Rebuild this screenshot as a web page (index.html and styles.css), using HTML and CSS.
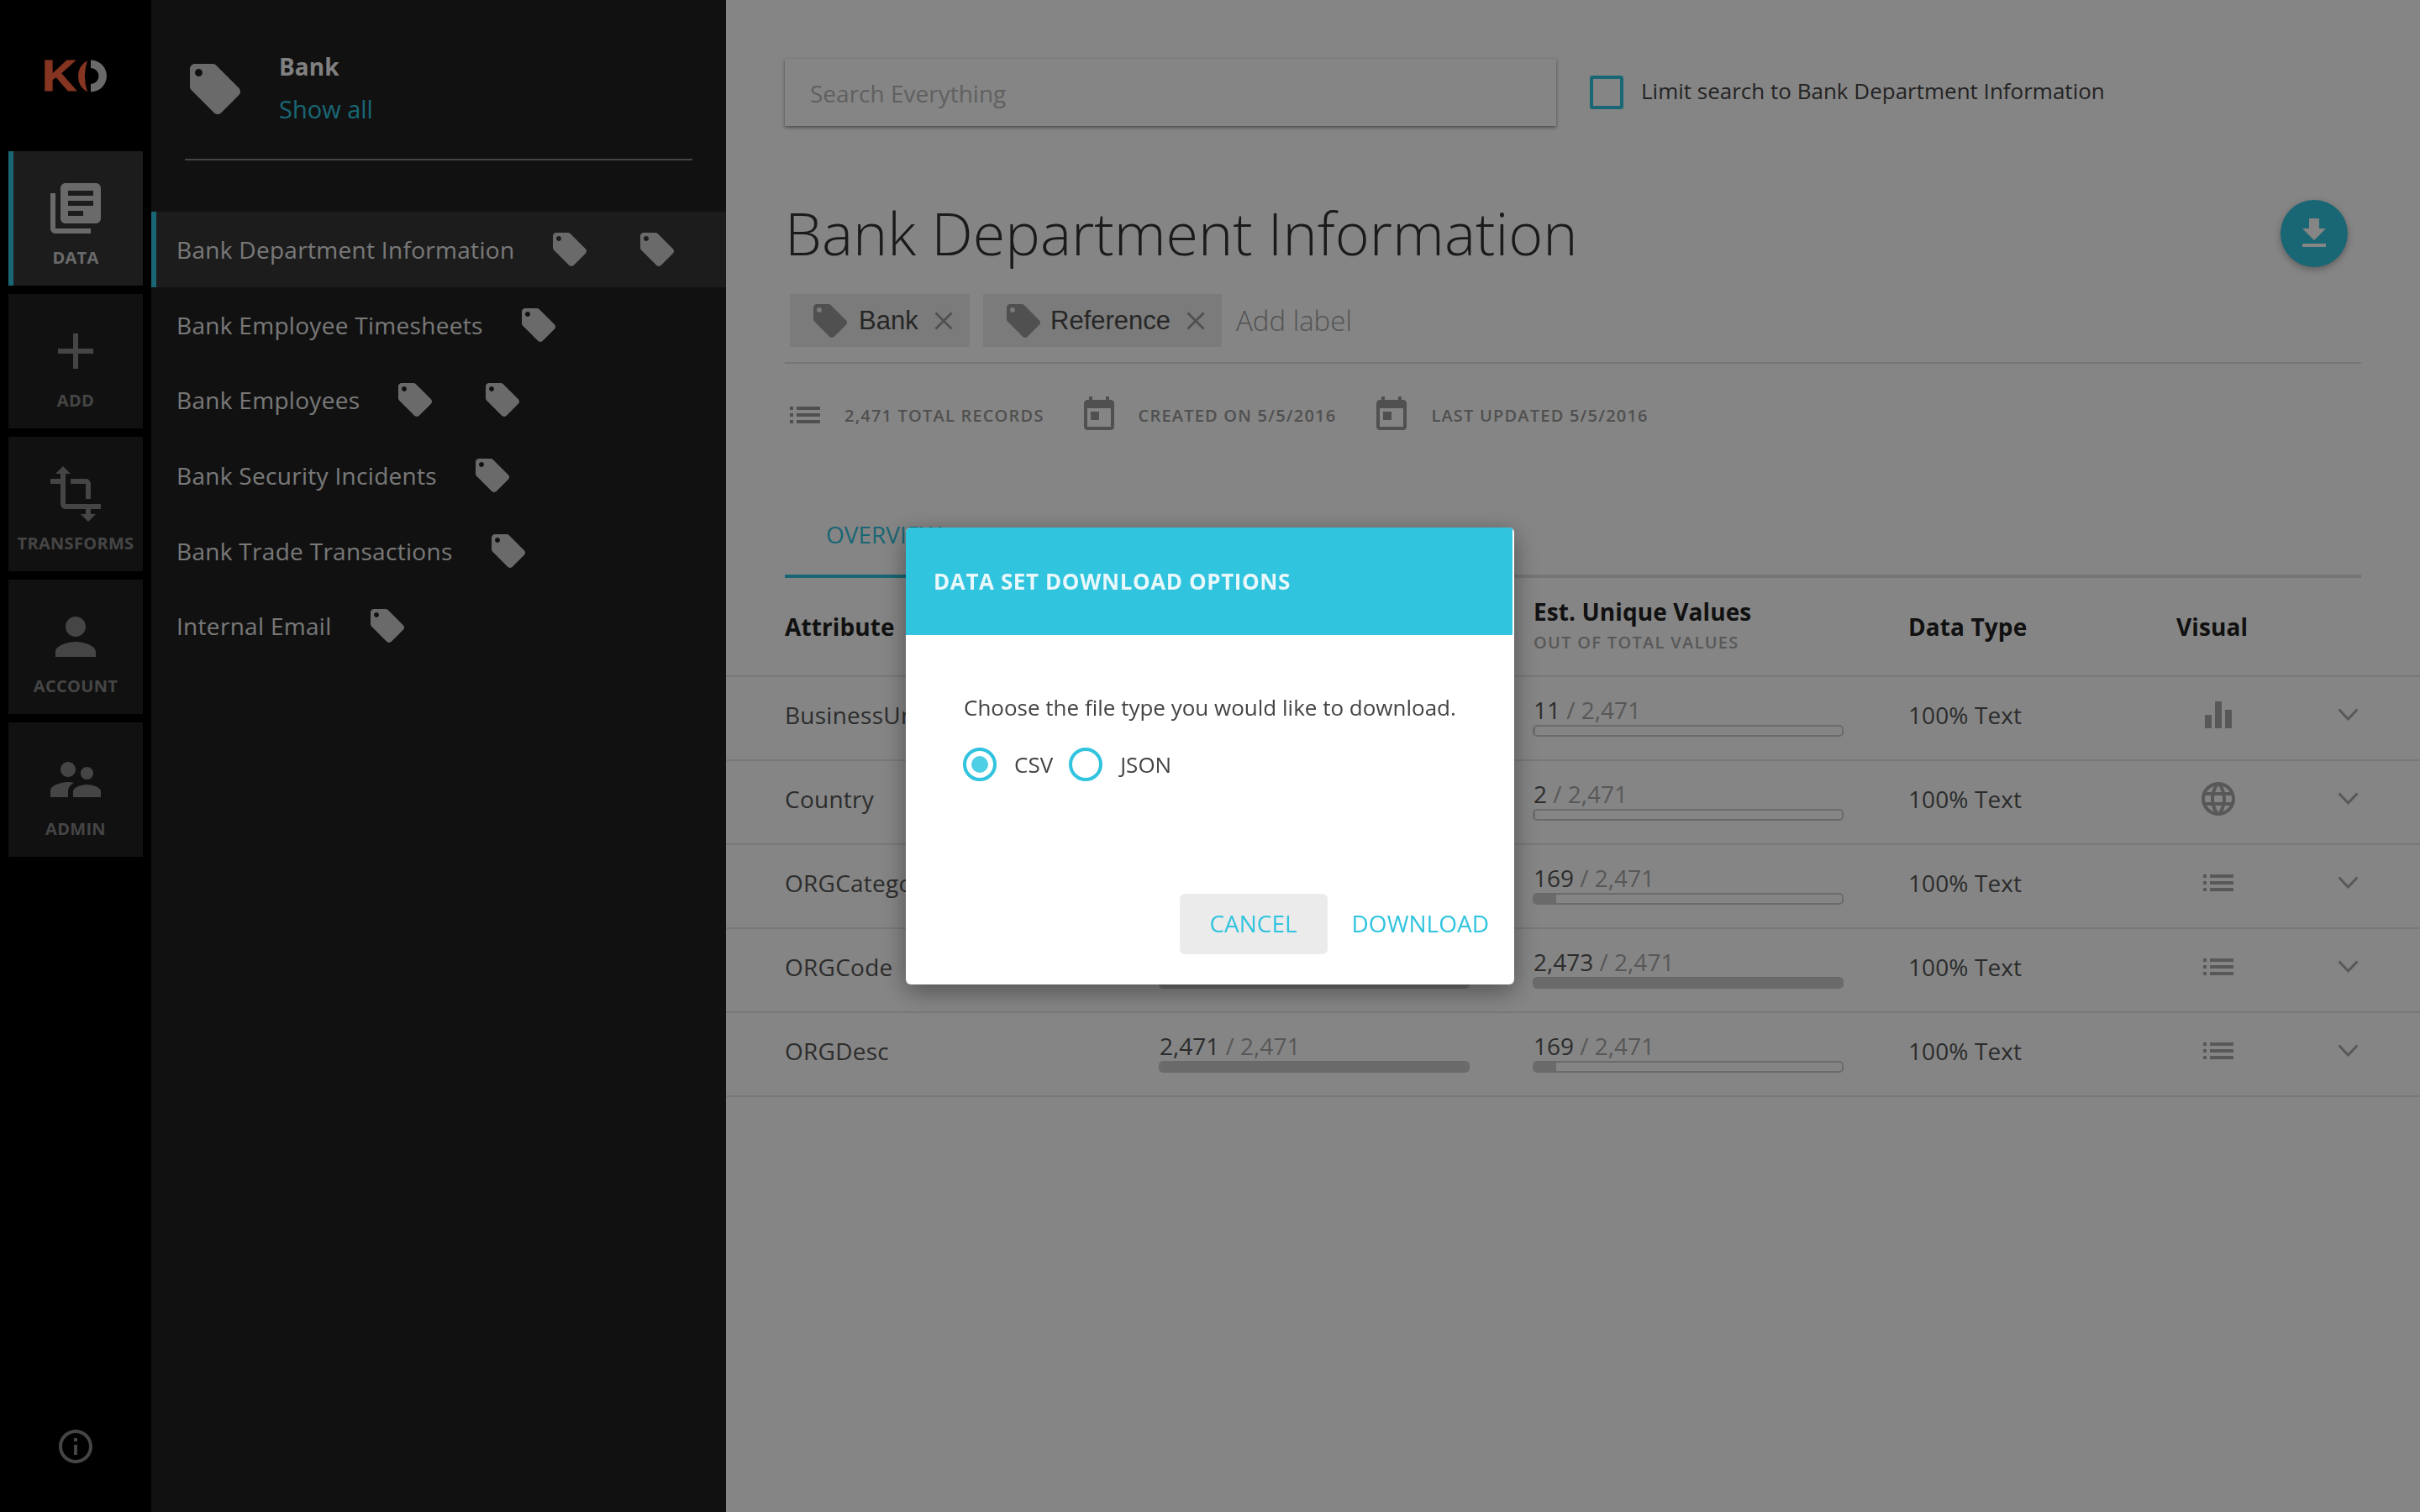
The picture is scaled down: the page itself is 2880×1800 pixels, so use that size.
FILE: index.html
```html
<!DOCTYPE html>
<html lang="en">
<head>
<meta charset="utf-8">
<title>Bank Department Information</title>
<link rel="stylesheet" href="styles.css">
</head>
<body>
<svg class="sprite" xmlns="http://www.w3.org/2000/svg">
  <symbol id="i-tag" viewBox="0 0 24 24"><path d="M21.41 11.58l-9-9C12.05 2.22 11.55 2 11 2H4c-1.1 0-2 .9-2 2v7c0 .55.22 1.05.59 1.42l9 9c.36.36.86.58 1.41.58.55 0 1.05-.22 1.41-.59l7-7c.37-.36.59-.86.59-1.41 0-.55-.23-1.06-.59-1.42zM5.5 7C4.67 7 4 6.33 4 5.5S4.67 4 5.5 4 7 4.67 7 5.5 6.33 7 5.5 7z"/></symbol>
  <symbol id="i-list" viewBox="0 0 24 24"><path d="M3 13h2v-2H3v2zm0 4h2v-2H3v2zm0-8h2V7H3v2zm4 4h14v-2H7v2zm0 4h14v-2H7v2zM7 7v2h14V7H7z"/></symbol>
  <symbol id="i-today" viewBox="0 0 24 24"><path d="M19 3h-1V1h-2v2H8V1H6v2H5c-1.11 0-1.99.9-1.99 2L3 19c0 1.1.89 2 2 2h14c1.1 0 2-.9 2-2V5c0-1.1-.9-2-2-2zm0 16H5V8h14v11zM7 10h5v5H7z"/></symbol>
  <symbol id="i-chev" viewBox="0 0 25 15"><path d="M1.5 1.5L12.5 13 23.5 1.5" fill="none" stroke="currentColor" stroke-width="3"/></symbol>
  <symbol id="i-close" viewBox="0 0 22 22"><path d="M1.500 1.500L20.500 20.500M20.500 1.500L1.500 20.500" fill="none" stroke="currentColor" stroke-width="2.800"/></symbol>
</svg>

<div class="app">
  <nav class="rail">
    <div class="logo">
      <span class="logo-k">K</span>
      <svg class="logo-o" viewBox="92 71 36 40" width="36" height="40"><path class="logo-red" d="M104 72A21.500 21.500 0 0 0 104 109.500A60 60 0 0 1 104 72Z"/><path class="logo-gray" d="M108 71.500A19 19 0 0 1 108 109.500V100A9.500 9.500 0 0 0 108 81Z"/></svg>
    </div>
    <a class="rail-item is-active"><svg class="rail-icon" viewBox="0 0 24 24"><path d="M4 6H2v14c0 1.1.9 2 2 2h14v-2H4V6zm16-4H8c-1.1 0-2 .9-2 2v12c0 1.1.9 2 2 2h12c1.1 0 2-.9 2-2V4c0-1.1-.9-2-2-2zm-1 9H9V9h10v2zm-4 4H9v-2h6v2zm4-8H9V5h10v2z"/></svg><span class="rail-label">DATA</span></a>
    <a class="rail-item"><svg class="rail-icon" viewBox="0 0 24 24"><path d="M19 13h-6v6h-2v-6H5v-2h6V5h2v6h6v2z"/></svg><span class="rail-label">ADD</span></a>
    <a class="rail-item"><svg class="rail-icon" viewBox="0 0 24 24"><path d="M22 18v-2H8V4h2L7 1 4 4h2v2H2v2h4v8c0 1.100.9 2 2 2h8v2h-2l3 3 3-3h-2v-2h4zM10 8h6v6h2V8c0-1.100-.9-2-2-2h-6v2z"/></svg><span class="rail-label">TRANSFORMS</span></a>
    <a class="rail-item"><svg class="rail-icon" viewBox="0 0 24 24"><path d="M12 12c2.210 0 4-1.790 4-4s-1.790-4-4-4-4 1.790-4 4 1.790 4 4 4zm0 2c-2.670 0-8 1.340-8 4v2h16v-2c0-2.660-5.330-4-8-4z"/></svg><span class="rail-label">ACCOUNT</span></a>
    <a class="rail-item"><svg class="rail-icon" viewBox="0 0 24 24"><path d="M16.500 12c1.380 0 2.490-1.120 2.490-2.500S17.880 7 16.500 7C15.120 7 14 8.120 14 9.500s1.120 2.500 2.500 2.500zM9 11c1.660 0 2.990-1.340 2.990-3S10.660 5 9 5C7.340 5 6 6.340 6 8s1.340 3 3 3zm7.500 3c-1.830 0-5.500.92-5.500 2.750V19h11v-2.250c0-1.830-3.670-2.750-5.500-2.750zM9 13c-2.330 0-7 1.170-7 3.500V19h7v-2.250c0-.85.33-2.340 2.370-3.470C10.500 13.100 9.660 13 9 13z"/></svg><span class="rail-label">ADMIN</span></a>
    <svg class="rail-info" viewBox="0 0 24 24"><path d="M11 17h2v-6h-2v6zm1-15C6.480 2 2 6.480 2 12s4.480 10 10 10 10-4.480 10-10S17.520 2 12 2zm0 18c-4.410 0-8-3.590-8-8s3.590-8 8-8 8 3.590 8 8-3.590 8-8 8zM11 9h2V7h-2v2z"/></svg>
  </nav>

  <aside class="panel">
    <header class="panel-head">
      <svg class="tag-lg"><use href="#i-tag"/></svg>
      <div class="panel-title">
        <div class="panel-name">Bank</div>
        <a class="panel-link">Show all</a>
      </div>
    </header>
    <ul class="sets">
      <li class="set is-active"><span>Bank Department Information</span><svg class="tag-sm"><use href="#i-tag"/></svg><svg class="tag-sm"><use href="#i-tag"/></svg></li>
      <li class="set"><span>Bank Employee Timesheets</span><svg class="tag-sm"><use href="#i-tag"/></svg></li>
      <li class="set"><span>Bank Employees</span><svg class="tag-sm"><use href="#i-tag"/></svg><svg class="tag-sm"><use href="#i-tag"/></svg></li>
      <li class="set"><span>Bank Security Incidents</span><svg class="tag-sm"><use href="#i-tag"/></svg></li>
      <li class="set"><span>Bank Trade Transactions</span><svg class="tag-sm"><use href="#i-tag"/></svg></li>
      <li class="set"><span>Internal Email</span><svg class="tag-sm"><use href="#i-tag"/></svg></li>
    </ul>
  </aside>

  <main class="main">
    <div class="top">
      <div class="search">Search Everything</div>
      <span class="check"></span>
      <span class="check-label">Limit search to Bank Department Information</span>
    </div>

    <div class="title-row">
      <h1 class="title">Bank Department Information</h1>
      <span class="fab"><svg viewBox="0 0 24 24"><path d="M19 9h-4V3H9v6H5l7 7 7-7zM5 18v2h14v-2H5z"/></svg></span>
    </div>

    <div class="labels">
      <span class="chip chip-bank"><svg class="chip-tag"><use href="#i-tag"/></svg><span>Bank</span><svg class="chip-x"><use href="#i-close"/></svg></span>
      <span class="chip chip-ref"><svg class="chip-tag"><use href="#i-tag"/></svg><span>Reference</span><svg class="chip-x"><use href="#i-close"/></svg></span>
      <span class="add-label">Add label</span>
    </div>

    <div class="stats">
      <svg class="stat-icon"><use href="#i-list"/></svg><span class="stat stat-a">2,471 TOTAL RECORDS</span>
      <svg class="stat-icon"><use href="#i-today"/></svg><span class="stat stat-b">CREATED ON 5/5/2016</span>
      <svg class="stat-icon"><use href="#i-today"/></svg><span class="stat">LAST UPDATED 5/5/2016</span>
    </div>

    <div class="tabs">
      <span class="tab is-active">OVERVIEW</span>
      <span class="tab">DATA</span>
      <span class="tab">SETTINGS</span>
      <span class="tab">AUDIT</span>
    </div>

    <div class="grid grid-head">
      <div class="th">Attribute</div>
      <div></div>
      <div class="th">Est. Unique Values<div class="th-sub">OUT OF TOTAL VALUES</div></div>
      <div class="th">Data Type</div>
      <div class="th">Visual</div>
      <div></div>
    </div>

    <div class="grid row">
      <div class="attr">BusinessUnit</div>
      <div></div>
      <div class="val"><div class="val-text"><b>11</b> / 2,471</div><div class="bar"><i class="fill" style="width:0.4%"></i></div></div>
      <div class="dtype">100% Text</div>
      <svg class="vis" viewBox="0 0 24 24"><path d="M10 20h4V4h-4v16zm-6 0h4v-8H4v8zM16 9v11h4V9h-4z"/></svg>
      <svg class="chev"><use href="#i-chev"/></svg>
    </div>
    <div class="grid row">
      <div class="attr">Country</div>
      <div></div>
      <div class="val"><div class="val-text"><b>2</b> / 2,471</div><div class="bar"><i class="fill" style="width:0.1%"></i></div></div>
      <div class="dtype">100% Text</div>
      <svg class="vis" viewBox="0 0 24 24"><path d="M11.990 2C6.470 2 2 6.480 2 12s4.470 10 9.990 10C17.520 22 22 17.520 22 12S17.520 2 11.990 2zm6.930 6h-2.950c-.32-1.250-.78-2.450-1.380-3.560 1.840.63 3.370 1.910 4.330 3.560zM12 4.040c.83 1.200 1.480 2.530 1.910 3.960h-3.820c.43-1.430 1.080-2.760 1.910-3.960zM4.260 14C4.100 13.360 4 12.690 4 12s.1-1.360.26-2h3.380c-.08.66-.14 1.320-.14 2 0 .68.06 1.340.14 2H4.260zm.82 2h2.950c.32 1.250.78 2.450 1.380 3.560-1.840-.63-3.370-1.900-4.330-3.560zm2.950-8H5.080c.96-1.660 2.490-2.930 4.330-3.560C8.810 5.550 8.350 6.750 8.030 8zM12 19.960c-.83-1.200-1.480-2.530-1.910-3.960h3.820c-.43 1.430-1.080 2.760-1.910 3.960zM14.340 14H9.660c-.09-.66-.16-1.320-.16-2 0-.68.07-1.350.16-2h4.680c.09.65.16 1.320.16 2 0 .68-.07 1.340-.16 2zm.25 5.560c.6-1.110 1.060-2.310 1.380-3.560h2.950c-.96 1.650-2.490 2.930-4.330 3.560zM16.360 14c.08-.66.14-1.320.14-2 0-.68-.06-1.340-.14-2h3.380c.16.64.26 1.310.26 2s-.1 1.360-.26 2h-3.380z"/></svg>
      <svg class="chev"><use href="#i-chev"/></svg>
    </div>
    <div class="grid row">
      <div class="attr">ORGCategory</div>
      <div></div>
      <div class="val"><div class="val-text"><b>169</b> / 2,471</div><div class="bar"><i class="fill" style="width:7%"></i></div></div>
      <div class="dtype">100% Text</div>
      <svg class="vis"><use href="#i-list"/></svg>
      <svg class="chev"><use href="#i-chev"/></svg>
    </div>
    <div class="grid row">
      <div class="attr">ORGCode</div>
      <div class="val"><div class="val-text"></div><div class="bar"><i class="fill" style="width:100%"></i></div></div>
      <div class="val"><div class="val-text"><b>2,473</b> / 2,471</div><div class="bar"><i class="fill" style="width:100%"></i></div></div>
      <div class="dtype">100% Text</div>
      <svg class="vis"><use href="#i-list"/></svg>
      <svg class="chev"><use href="#i-chev"/></svg>
    </div>
    <div class="grid row">
      <div class="attr">ORGDesc</div>
      <div class="val"><div class="val-text"><b>2,471</b> / 2,471</div><div class="bar"><i class="fill" style="width:100%"></i></div></div>
      <div class="val"><div class="val-text"><b>169</b> / 2,471</div><div class="bar"><i class="fill" style="width:7%"></i></div></div>
      <div class="dtype">100% Text</div>
      <svg class="vis"><use href="#i-list"/></svg>
      <svg class="chev"><use href="#i-chev"/></svg>
    </div>
  </main>
</div>

<div class="scrim"></div>

<section class="modal">
  <h2 class="modal-head">DATA SET DOWNLOAD OPTIONS</h2>
  <div class="modal-body">
    <p class="modal-text">Choose the file type you would like to download.</p>
    <div class="radios">
      <span class="radio is-on"></span><span class="radio-label">CSV</span>
      <span class="radio"></span><span class="radio-label">JSON</span>
    </div>
  </div>
  <div class="modal-foot">
    <span class="btn btn-cancel">CANCEL</span>
    <span class="btn">DOWNLOAD</span>
  </div>
</section>
</body>
</html>
```
FILE: styles.css
```css
* { box-sizing: border-box; }
html, body { margin: 0; height: 100%; }
body { font-family: "Open Sans", "Liberation Sans", sans-serif; background: #fff; overflow: hidden; }
.sprite { display: none; }
svg { fill: currentColor; display: block; flex: none; }
h1, h2, p, ul { margin: 0; padding: 0; font-weight: normal; }
ul { list-style: none; }

.app { display: flex; height: 1800px; }

/* rail */
.rail { width: 180px; flex: none; background: #000; display: flex; flex-direction: column; }
.logo { height: 180px; display: flex; align-items: center; padding-left: 50px; flex: none; }
.logo-k { font-family: "Liberation Sans", Arial, sans-serif; font-size: 52px; font-weight: 700; line-height: 1; color: #ff6640; width: 42px; transform: scaleX(1.1); transform-origin: left center; -webkit-text-stroke: 1px #ff6640; }
.logo-o { margin-top: 2px; }
.logo-red { fill: #ff6640; }
.logo-gray { fill: #ccc; }
.rail-item { height: 160px; margin: 0 10px 10px; padding-top: 32px; background: #222; color: #858585; display: flex; flex-direction: column; align-items: center; flex: none; }
.rail-item.is-active { background: #363636; color: #ccc; box-shadow: inset 6px 0 0 #31c4de; }
.rail-icon { width: 72px; height: 72px; }
.rail-label { font-size: 20px; font-weight: 700; line-height: 24px; margin-top: 11px; letter-spacing: .3px; }
.rail-info { width: 48px; height: 48px; margin: auto 0 54px 66px; color: #858585; }

/* panel */
.panel { width: 684px; flex: none; background: #222; color: #e6e6e6; }
.panel-head { margin: 0 40px; height: 191px; padding-top: 54px; display: flex; border-bottom: 2px solid #858585; }
.tag-lg { width: 72px; height: 72px; margin: 16px 40px 0 0; color: #ccc; }
.panel-name { font-size: 28px; font-weight: 700; line-height: 50px; color: #f5f5f5; }
.panel-link { font-size: 29px; line-height: 52px; color: #31c4de; display: block; }
.sets { margin-top: 61px; }
.set { height: 89.7px; padding-left: 30px; display: flex; align-items: center; font-size: 28px; letter-spacing: .3px; white-space: nowrap; }
.set.is-active { background: #363636; box-shadow: inset 6px 0 0 #31c4de; }
.tag-sm { width: 48px; height: 48px; margin-left: 42px; margin-right: -4px; color: #ccc; }
.tag-sm + .tag-sm { margin-left: 60px; }

/* main */
.main { flex: 1; min-width: 0; }
.top { display: flex; align-items: center; margin: 70px 70px 0; height: 80px; }
.search { width: 918px; height: 80px; padding: 2px 0 0 30px; display: flex; align-items: center; font-size: 28px; color: #b8b8b8; box-shadow: 0 2px 4px rgba(0,0,0,.4), 0 0 2px rgba(0,0,0,.12); }
.check { width: 40px; height: 40px; margin: 0 21px 0 40px; border: 4px solid #31c4de; border-radius: 3px; flex: none; }
.check-label { font-size: 26px; color: #444; margin-top: -5px; }

.title-row { margin: 78px 70px 0; height: 100px; display: flex; align-items: center; justify-content: space-between; padding-right: 16px; }
.title { font-size: 70px; font-weight: 300; line-height: 100px; color: #333; margin-top: -2px; }
.fab { width: 80px; height: 80px; border-radius: 50%; background: #31c4de; color: #fff; display: flex; align-items: center; justify-content: center; box-shadow: 0 3px 8px rgba(0,0,0,.3); }
.fab svg { width: 48px; height: 48px; }

.labels { margin: 22px 70px 0; padding: 0 0 18px 6px; height: 83px; display: flex; align-items: flex-start; border-bottom: 2px solid #e0e0e0; }
.chip { height: 63px; background: #ebebeb; padding-left: 24px; display: flex; align-items: center; font-family: "Liberation Sans", Arial, sans-serif; font-size: 31px; color: #4a4a4a; }
.chip span { padding-top: 1px; }
.chip-bank { width: 214px; margin-right: 16px; }
.chip-ref { width: 284px; margin-right: 17px; }
.chip-tag { width: 48px; height: 48px; margin-right: 8px; color: #999; }
.chip-bank .chip-tag { margin-right: 10px; }
.chip-x { width: 22px; height: 22px; margin-left: 19px; color: #999; }
.add-label { font-size: 33px; font-weight: 300; line-height: 63px; color: #a0a0a0; }

.stats { margin: 37px 70px 0; height: 48px; display: flex; align-items: center; color: #999; }
.stat-icon { width: 48px; height: 48px; }
.stat { font-size: 20px; font-weight: 600; letter-spacing: 1.2px; margin-left: 23px; }
.stat-a { margin-right: 41px; }
.stat-b { margin-right: 42px; }

.tabs { margin: 70px 70px 0; height: 100px; display: flex; align-items: center; border-bottom: 4px solid #e0e0e0; }
.tab { height: 100px; padding: 0 49px; margin-bottom: -4px; display: flex; align-items: center; font-size: 28px; color: #aaa; }
.tab.is-active { color: #31c4de; border-bottom: 4px solid #31c4de; }

.grid { display: grid; grid-template-columns: 446px 445px 446px 319px 192px 1fr; padding: 0 70px; align-items: center; }
.grid-head { height: 118px; border-bottom: 2px solid #e6e6e6; }
.th { font-size: 28px; font-weight: 700; color: #222; line-height: 38px; letter-spacing: .1px; }
.th-sub { font-size: 20px; font-weight: 600; color: #aaa; line-height: 36px; letter-spacing: 1.3px; }
.row { height: 100px; border-bottom: 2px solid #e6e6e6; padding-bottom: 9px; }
.attr { font-size: 28px; letter-spacing: .25px; color: #555; }
.dtype { font-size: 28px; letter-spacing: .1px; color: #555; }
.val { margin-top: 3px; }
.val-text { height: 34px; font-size: 28px; line-height: 34px; color: #aaa; }
.val-text b { font-weight: 400; color: #555; }
.bar { width: 370px; height: 14px; margin-top: 1px; margin-left: -1px; border: 2px solid #ccc; border-radius: 5px; overflow: hidden; }
.fill { display: block; height: 100%; background: #ccc; }
.vis { width: 48px; height: 48px; margin-left: 26px; color: #aaa; }
.chev { width: 25px; height: 15px; color: #aaa; }

/* overlay */
.scrim { position: fixed; inset: 0; background: rgba(0,0,0,.48); }
.modal { position: fixed; left: 1078px; top: 628px; width: 724px; height: 544px; background: #fff; border-radius: 6px; box-shadow: 0 8px 30px rgba(0,0,0,.4); display: flex; flex-direction: column; overflow: hidden; }
.modal-head { height: 128px; margin-right: 2px; padding-left: 33px; display: flex; align-items: center; background: #31c4de; color: #e8f8fb; font-size: 26px; font-weight: 700; letter-spacing: .6px; }
.modal-body { padding: 66px 69px 0 68px; }
.modal-text { font-size: 26px; line-height: 40px; color: #444; white-space: nowrap; padding-left: 1px; }
.radios { display: flex; align-items: center; margin-top: 28px; font-size: 26px; color: #444; }
.radio { width: 40px; height: 40px; border: 4px solid #31c4de; border-radius: 50%; display: flex; align-items: center; justify-content: center; flex: none; }
.radio.is-on::after { content: ""; width: 20px; height: 20px; border-radius: 50%; background: #4dcfe5; }
.radio-label { margin: 0 19px 0 21px; }
.modal-foot { margin-top: auto; padding: 0 30px 36px 0; display: flex; justify-content: flex-end; align-items: center; gap: 29px; }
.btn { height: 72px; display: flex; align-items: center; font-size: 28px; color: #31c4de; padding-bottom: 2px; }
.btn-cancel { width: 176px; justify-content: center; background: #ebebeb; border-radius: 6px; }
```
